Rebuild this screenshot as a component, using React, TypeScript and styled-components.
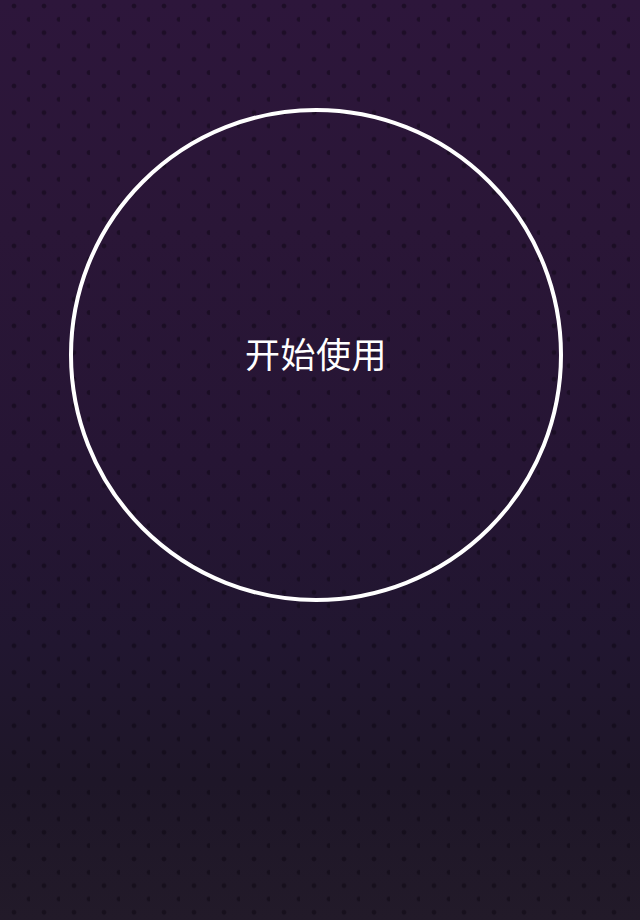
import React from "react";
import styled, { createGlobalStyle } from "styled-components";

const Global = createGlobalStyle`
  html, body { margin: 0; padding: 0; background: #1e1626; }
  #root { width: 640px; height: 920px; }
`;

const Screen = styled.main`
  width: 640px;
  height: 920px;
  box-sizing: border-box;
  display: flex;
  flex-direction: column;
  align-items: flex-start;
  padding-top: 108px;
  padding-left: 69px;
  background-color: #261632;
  background-image:
    radial-gradient(circle at 14px 6px, rgba(8, 3, 12, 0.42) 0, rgba(8, 3, 12, 0.42) 1.9px, transparent 2.8px),
    radial-gradient(circle at 29px 19.3px, rgba(8, 3, 12, 0.42) 0, rgba(8, 3, 12, 0.42) 1.9px, transparent 2.8px),
    linear-gradient(180deg, #2d163b 0%, #2a1637 25%, #261534 50%, #211630 70%, #1e1628 85%, #221a29 100%);
  background-size: 30px 26.667px, 30px 26.667px, 100% 100%;
  background-repeat: repeat, repeat, no-repeat;
`;

const StartRing = styled.button`
  width: 494px;
  height: 494px;
  box-sizing: border-box;
  border: 4.5px solid #ffffff;
  border-radius: 50%;
  background: transparent;
  display: flex;
  align-items: center;
  justify-content: center;
  padding: 0 0 6px 0;
  cursor: pointer;
`;

const Label = styled.span`
  color: #ffffff;
  font-family: "Noto Sans CJK SC", "Noto Sans", sans-serif;
  font-weight: 400;
  font-size: 35px;
  letter-spacing: 0.5px;
  line-height: 1;
`;

export default function App() {
  return (
    <>
      <Global />
      <Screen>
        <StartRing type="button">
          <Label>开始使用</Label>
        </StartRing>
      </Screen>
    </>
  );
}
